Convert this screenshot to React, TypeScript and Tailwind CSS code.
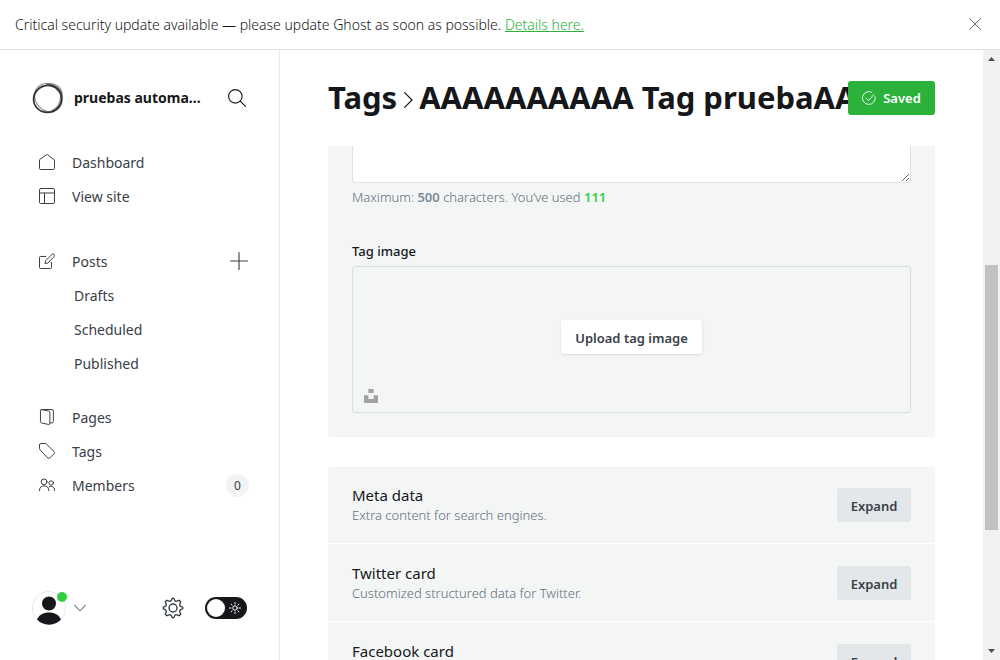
import type { ReactNode } from "react";

const stroke = {
  fill: "none",
  stroke: "currentColor",
  strokeLinecap: "round" as const,
  strokeLinejoin: "round" as const,
};

function Icon({ children, className = "size-4", width = 1.5 }: { children: ReactNode; className?: string; width?: number }) {
  return (
    <svg viewBox="0 0 24 24" className={className} {...stroke} strokeWidth={width} aria-hidden="true">
      {children}
    </svg>
  );
}

const icons = {
  home: <path d="M.75 9.2v12.3a1.75 1.75 0 0 0 1.75 1.75h19a1.75 1.75 0 0 0 1.75-1.75V9.2L12.9 1.1a1.5 1.5 0 0 0-1.8 0z" />,
  layout: (
    <>
      <rect x=".75" y=".75" width="22.5" height="22.5" rx="2" />
      <path d="M.75 7.5h22.5M8.25 7.5v15.75" />
    </>
  ),
  edit: (
    <>
      <path d="m13 15-4 .8.8-4L19.6 1.9a2.3 2.3 0 0 1 3.2 3.2z" />
      <path d="M18.8 14v7.75a1.5 1.5 0 0 1-1.5 1.5H2.25a1.5 1.5 0 0 1-1.5-1.5V6.7a1.5 1.5 0 0 1 1.5-1.5H10" />
    </>
  ),
  pages: (
    <>
      <path d="M3.2.75h16a2.3 2.3 0 0 1 2.3 2.3v15.6a2.3 2.3 0 0 1-2.3 2.3h-3" />
      <path d="M3.8.9 14.5 3a2.2 2.2 0 0 1 1.8 2.2v16.2a1.8 1.8 0 0 1-2.2 1.8L3.6 20.8A1.8 1.8 0 0 1 2.2 19V2.2A1.4 1.4 0 0 1 3.8.9z" />
    </>
  ),
  tag: <path d="M.75 2.75v5.6a3 3 0 0 0 .9 2.1l11.5 12a2.2 2.2 0 0 0 3.1 0l6.4-6.4a2.2 2.2 0 0 0 0-3.1L11.15 1.65a3 3 0 0 0-2.1-.9h-6.3a2 2 0 0 0-2 2z" />,
  members: (
    <>
      <circle cx="7.7" cy="7.3" r="4.3" />
      <circle cx="18.2" cy="9" r="3.3" />
      <path d="M.75 20.5v-1a7 7 0 0 1 13.9 0v1M15.2 14.6a5.2 5.2 0 0 1 8 4.6v1.3" />
    </>
  ),
};

function NavLink({ icon, children }: { icon: ReactNode; children: ReactNode }) {
  return (
    <a href="#" className="flex h-[34px] flex-1 items-center gap-[17px] pl-[39px]">
      <Icon>{icon}</Icon>
      <span>{children}</span>
    </a>
  );
}

function SubLink({ children }: { children: ReactNode }) {
  return (
    <a href="#" className="flex h-[34px] items-center pl-[74px]">
      {children}
    </a>
  );
}

function Sidebar() {
  return (
    <aside className="flex w-[280px] shrink-0 flex-col border-r border-[#e5e7e9] text-[14px] text-[#394047]">
      <div className="flex h-[95px] items-center pl-8">
        <svg viewBox="0 0 32 32" className="size-8 text-[#333]" fill="none" stroke="currentColor" aria-hidden="true">
          <ellipse cx="15.5" cy="17" rx="14" ry="13.5" strokeWidth="1.6" />
          <ellipse cx="15.5" cy="16.5" rx="14.5" ry="13" strokeWidth="1.2" opacity=".7" transform="rotate(-35 16 16)" />
          <ellipse cx="16" cy="15.5" rx="15" ry="12.8" strokeWidth="1" opacity=".6" transform="rotate(50 16 16)" />
          <path d="M14 2.6c9-2.4 16 4 15.5 11.5S26 27 20 29.500" strokeWidth="2.8" opacity=".45" />
        </svg>
        <span className="mr-[23px] ml-[10px] w-[131px] truncate text-[14px] font-bold text-[#15171a]">pruebas automatizadas</span>
        <button type="button" aria-label="Search" className="text-[#15171a]">
          <Icon className="size-[18px]">
            <circle cx="9.8" cy="9.8" r="9" />
            <path d="m16.3 16.3 7 7" />
          </Icon>
        </button>
      </div>

      <nav>
        <div>
          <NavLink icon={icons.home}>Dashboard</NavLink>
          <NavLink icon={icons.layout}>View site</NavLink>
        </div>
        <div className="mt-[31px]">
          <div className="flex items-center pr-[31px]">
            <NavLink icon={icons.edit}>Posts</NavLink>
            <button type="button" aria-label="New post">
              <Icon className="size-[18px]">
                <path d="M12 .75v22.5M.75 12h22.5" />
              </Icon>
            </button>
          </div>
          <SubLink>Drafts</SubLink>
          <SubLink>Scheduled</SubLink>
          <SubLink>Published</SubLink>
        </div>
        <div className="mt-5">
          <NavLink icon={icons.pages}>Pages</NavLink>
          <NavLink icon={icons.tag}>Tags</NavLink>
          <div className="flex items-center pr-[30px]">
            <NavLink icon={icons.members}>Members</NavLink>
            <span className="flex size-[23px] items-center justify-center rounded-full bg-[#f1f3f4] pt-px text-[12px]">0</span>
          </div>
        </div>
      </nav>

      <div className="mt-auto flex h-[104px] items-center pl-8">
        <button type="button" aria-label="Account" className="relative flex items-center">
          <svg viewBox="0 0 34 34" className="size-[34px]" aria-hidden="true">
            <circle cx="17" cy="17" r="16.5" fill="#fff" stroke="#e5e9ed" />
            <circle cx="17" cy="12.5" r="7" fill="#15171a" />
            <path d="M5 28.5c2-4.5 6.500-7 12-7s10 2.500 12 7a16.500 16.500 0 0 1-24 0z" fill="#15171a" />
          </svg>
          <span className="absolute top-px left-[25px] size-[10px] rounded-full bg-[#30cf43]" />
          <Icon className="ml-2 size-3" width={2}>
            <path d="m1 6.5 11 11 11-11" />
          </Icon>
        </button>
        <a href="#" aria-label="Settings" className="ml-[76px]">
          <Icon className="size-[22px]">
            <circle cx="12" cy="12" r="4.3" />
            <path d="M12 1.3h.8l1.2 2.5c.4.8 1.3 1.1 2.1.8l2.6-1 1.7 1.7-1 2.6c-.3.8 0 1.7.8 2.1l2.5 1.2v1.6l-2.5 1.2c-.8.4-1.1 1.3-.8 2.1l1 2.6-1.7 1.7-2.6-1c-.8-.3-1.7 0-2.1.8l-1.2 2.5h-1.6L10 20.2c-.4-.8-1.3-1.1-2.1-.8l-2.6 1-1.7-1.7 1-2.6c.3-.8 0-1.7-.8-2.1l-2.5-1.2v-1.6L3.8 10c.8-.4 1.1-1.3.8-2.1l-1-2.6 1.7-1.7 2.6 1c.8.3 1.7 0 2.1-.8l1.2-2.5z" />
          </Icon>
        </a>
        <button
          type="button"
          role="switch"
          aria-checked="false"
          aria-label="Night mode"
          className="ml-[21px] flex h-[22px] w-[42px] items-center rounded-full bg-[#15171a] px-[2px] text-white"
        >
          <span className="size-[18px] rounded-full bg-white" />
          <Icon className="ml-1 size-3" width={2}>
            <circle cx="12" cy="12" r="4.5" />
            <path d="M12 1v3M12 20v3M1 12h3M20 12h3M4.2 4.2l2 2M17.8 17.8l2 2M4.2 19.8l2-2M17.8 6.2l2-2" />
          </Icon>
        </button>
      </div>
    </aside>
  );
}

const sections = [
  { title: "Meta data", text: "Extra content for search engines." },
  { title: "Twitter card", text: "Customized structured data for Twitter." },
  { title: "Facebook card", text: "Customize Open Graph data." },
];

function TagForm() {
  return (
    <div className="min-h-0 flex-1 overflow-hidden">
      <section className="rounded-b-[3px] bg-[#f4f6f6] px-6 pb-6">
        <textarea
          aria-label="Description"
          className="block h-[37px] w-full resize rounded-b-[3px] border border-t-0 border-[#dde1e5] bg-white"
        />
        <p className="mt-1 text-[13px] leading-5 font-light text-[#626d79]">
          Maximum: <b className="font-semibold text-[#7c8b9a]">500</b> characters. You’ve used{" "}
          <b className="font-semibold text-[#30cf43]">111</b>
        </p>
        <h4 className="mt-[34px] text-[13px] leading-5 font-medium text-[#15171a]">Tag image</h4>
        <div className="mt-[5px] grid h-[147px] place-items-center rounded-[3px] border border-[#dadddf]">
          <button
            type="button"
            className="col-start-1 row-start-1 mt-[-5px] h-[34px] rounded-[3px] bg-white px-[14px] pt-[3px] text-[13px] font-semibold text-[#394047] shadow-sm"
          >
            Upload tag image
          </button>
          <button type="button" aria-label="Unsplash" className="col-start-1 row-start-1 m-2 mb-[6px] self-end justify-self-start p-[3px] text-[#a1a3a3]">
            <svg viewBox="0 0 14 14" className="size-[14px]" fill="currentColor" aria-hidden="true">
              <path d="M4.4 0h5.2v4H4.4zM0 6.2h4.4v3.9h5.2V6.2H14V14H0z" />
            </svg>
          </button>
        </div>
      </section>

      <section className="mt-[30px] rounded-[3px] bg-[#f4f6f6]">
        {sections.map((s) => (
          <div
            key={s.title}
            className="flex items-center justify-between border-t border-white px-6 pt-[22px] pb-[21px] first:border-t-0 first:pt-[21px]"
          >
            <div className="-my-2">
              <h4 className="text-[15px] leading-5 text-[#15171a]">{s.title}</h4>
              <p className="text-[13px] leading-5 font-light text-[#626d79]">{s.text}</p>
            </div>
            <button type="button" className="h-[34px] w-[74px] rounded-[3px] bg-[#e3e7ea] pt-[3px] text-[13px] font-semibold text-[#394047]">
              Expand
            </button>
          </div>
        ))}
      </section>
    </div>
  );
}

function Scrollbar() {
  return (
    <div className="flex w-[17px] shrink-0 flex-col items-center bg-[#f1f1f1] text-[#505050]" aria-hidden="true">
      <svg viewBox="0 0 17 17" className="size-[17px]" fill="currentColor">
        <path d="M5 11h7L8.5 7z" />
      </svg>
      <div className="flex w-full flex-1 flex-col px-[2px]">
        <div className="flex-[198]" />
        <div className="flex-[265] bg-[#c1c1c1]" />
        <div className="flex-[113]" />
      </div>
      <svg viewBox="0 0 17 17" className="size-[17px]" fill="currentColor">
        <path d="M5 6h7l-3.5 4z" />
      </svg>
    </div>
  );
}

export default function App() {
  return (
    <div className="flex h-screen flex-col overflow-hidden bg-white font-['Noto_Sans',sans-serif]">
      <header className="flex h-[50px] shrink-0 items-center justify-between border-b border-[#dfe1e3] px-[15px] pb-px text-[14px] font-light text-[#15171a]">
        <p>
          Critical security update available — please update Ghost as soon as possible.{" "}
          <a href="#" className="text-[#2ab23a] underline">
            Details here.
          </a>
        </p>
        <button type="button" aria-label="Close" className="mr-1 text-[#394047]">
          <Icon className="size-3">
            <path d="m1 1 22 22M23 1 1 23" />
          </Icon>
        </button>
      </header>
      <div className="flex min-h-0 flex-1">
        <Sidebar />
        <main className="flex min-w-0 flex-1 flex-col px-12">
          <div className="flex h-24 shrink-0 items-center">
            <h2 className="flex min-w-0 flex-1 items-center overflow-hidden pb-[2px] text-[31px] leading-[46px] font-bold whitespace-nowrap text-[#15171a]">
              <a href="#">Tags</a>
              <Icon className="mx-[3px] mt-[5px] size-4 shrink-0" width={1.8}>
                <path d="m7 1 11 11L7 23" />
              </Icon>
              <span>AAAAAAAAAA Tag pruebaAA</span>
            </h2>
            <button
              type="button"
              className="flex h-[34px] w-[87px] shrink-0 items-center justify-center gap-[7px] rounded-[3px] bg-[#2ab23a] text-[13px] font-semibold text-white"
            >
              <Icon className="size-[14px]">
                <path d="M22.5 9.5A11 11 0 1 1 17 2.300" />
                <path d="m7 12 4 4.500L20.500 6" />
              </Icon>
              <span className="pt-[2px]">Saved</span>
            </button>
          </div>
          <TagForm />
        </main>
        <Scrollbar />
      </div>
    </div>
  );
}
